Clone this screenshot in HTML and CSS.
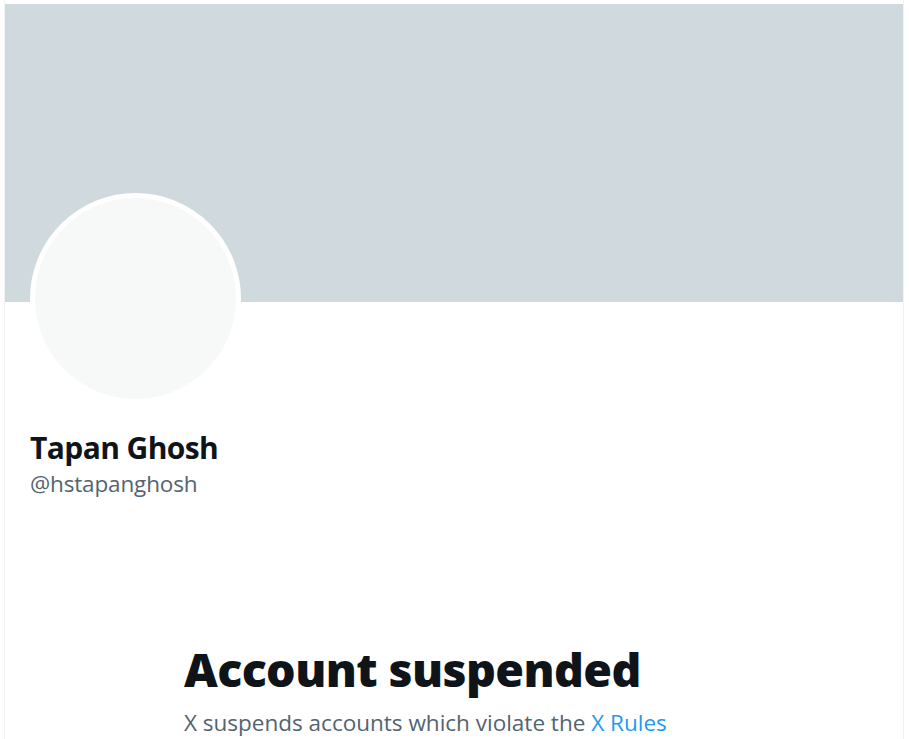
FILE: index.html
```html
<!DOCTYPE html>
<html lang="en">
<head>
<meta charset="utf-8">
<title>Tapan Ghosh (@hstapanghosh)</title>
<link rel="stylesheet" href="styles.css">
</head>
<body>
<main class="column">
  <div class="banner"></div>
  <section class="profile">
    <div class="avatar"></div>
    <h2 class="name">Tapan Ghosh</h2>
    <div class="handle">@hstapanghosh</div>
  </section>
  <section class="empty">
    <h1 class="empty-title">Account suspended</h1>
    <p class="empty-text">X suspends accounts which violate the <a class="link" href="#">X Rules</a></p>
  </section>
</main>
</body>
</html>
```

FILE: styles.css
```css
html, body {
  margin: 0;
  padding: 0;
  background: #ffffff;
  overflow: hidden;
}

body {
  font-family: "Open Sans", "Noto Sans", "Liberation Sans", sans-serif;
  color: #0f1419;
}

.column {
  box-sizing: border-box;
  width: 900px;
  min-height: 739px;
  margin-left: 4px;
  padding-top: 4px;
  border-left: 1px solid #eff3f4;
  border-right: 1px solid #eff3f4;
}

.banner {
  height: 298px;
  background: #cfd9de;
}

.profile {
  padding: 0 25px;
}

.avatar {
  box-sizing: border-box;
  width: 211px;
  height: 211px;
  margin-top: -109px;
  border-radius: 50%;
  border: 5px solid #ffffff;
  background: #f7f9f9;
}

.name {
  margin: 26px 0 0;
  font-size: 30px;
  line-height: 36px;
  font-weight: 700;
  letter-spacing: -0.6px;
}

.handle {
  margin-top: 3px;
  font-size: 22.5px;
  line-height: 30px;
  color: #536471;
  letter-spacing: -0.15px;
}

.empty {
  width: 540px;
  margin: 0 auto;
  padding: 0 30px;
}

.empty-title {
  margin: 143px 0 0;
  font-size: 46.5px;
  line-height: 54px;
  font-weight: 800;
  letter-spacing: -0.6px;
}

.empty-text {
  margin: 12px 0 0;
  font-size: 22.5px;
  line-height: 30px;
  color: #536471;
}

.link {
  color: #1d9bf0;
  text-decoration: none;
}
```
